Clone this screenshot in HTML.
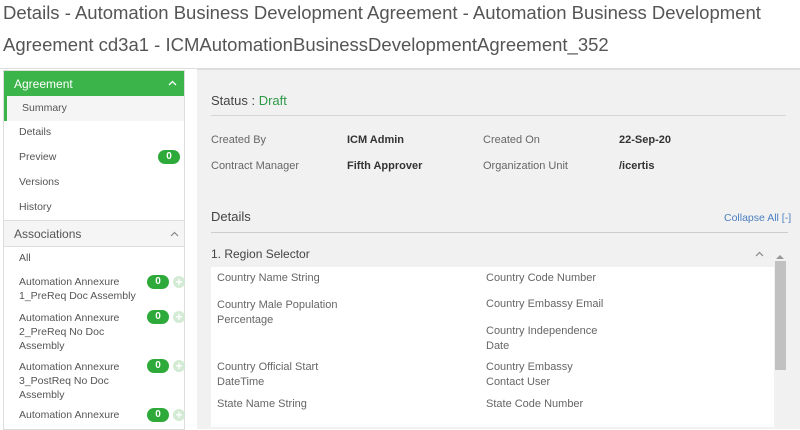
<!DOCTYPE html>
<html><head><style>
*{margin:0;padding:0;box-sizing:border-box}
body{width:800px;height:423px;overflow:hidden;background:#fff;font-family:"Liberation Sans",sans-serif;color:#555;position:relative}
.a{position:absolute;white-space:nowrap}
.t{font-size:18.5px;color:#555;left:3px}
.sb{left:3px;top:70px;width:182px;height:360px;border:1px solid #ddd;background:#fff}
.s{font-size:10.5px;color:#555}
.badge{position:absolute;background:#2eaa3a;color:#fff;font-size:10px;border-radius:8px;width:22px;height:14px;text-align:center;line-height:14px;font-weight:bold}
.plus{position:absolute;width:12px;height:12px;border-radius:50%;background:#d3ebd5;color:#fff;font-size:12px;line-height:12px;text-align:center;font-weight:bold}
.main{left:197px;top:69px;width:603px;height:360px;background:#f2f1f1;border-top:1px solid #ddd}
.l{font-size:11px;color:#666}
.v{font-size:11px;color:#333;font-weight:bold}
.chev{position:absolute}
</style></head><body>
<div class="a t" style="top:2px">Details - Automation Business Development Agreement - Automation Business Development</div>
<div class="a t" style="top:34px">Agreement cd3a1 - ICMAutomationBusinessDevelopmentAgreement_352</div>
<div class="a" style="left:0;top:68px;width:800px;height:1px;background:#ddd"></div>

<div class="a sb">
 <div class="a" style="left:0;top:0;width:180px;height:25px;background:#3bb54a"></div>
 <div class="a" style="left:10px;top:6px;color:#fff;font-size:12px">Agreement</div>
 <svg class="chev" style="left:164px;top:9px" width="9" height="6"><path d="M1 5 L4.5 1.5 L8 5" stroke="#fff" stroke-width="1.3" fill="none"/></svg>
 <div class="a" style="left:0;top:25px;width:180px;height:25px;background:#f5f5f5;border-left:3px solid #3bb54a"></div>
 <div class="a s" style="left:18px;top:31px">Summary</div>
 <div class="a s" style="left:15px;top:55px">Details</div>
 <div class="a s" style="left:15px;top:80px">Preview</div>
 <div class="badge" style="left:154px;top:79px">0</div>
 <div class="a s" style="left:15px;top:105px">Versions</div>
 <div class="a s" style="left:15px;top:130px">History</div>
 <div class="a" style="left:0;top:149px;width:180px;height:27px;background:#f5f5f5;border-top:1px solid #ddd;border-bottom:1px solid #ddd"></div>
 <div class="a" style="left:10px;top:156px;font-size:12px;color:#555">Associations</div>
 <svg class="chev" style="left:166px;top:160px" width="9" height="6"><path d="M1 5 L4.5 1.5 L8 5" stroke="#888" stroke-width="1.2" fill="none"/></svg>
 <div class="a s" style="left:15px;top:181px">All</div>
 <div class="a s" style="left:15px;top:204px;line-height:14px">Automation Annexure<br>1_PreReq Doc Assembly</div>
 <div class="badge" style="left:143px;top:204px">0</div><div class="plus" style="left:169px;top:205px">+</div>
 <div class="a s" style="left:15px;top:240px;line-height:14px">Automation Annexure<br>2_PreReq No Doc<br>Assembly</div>
 <div class="badge" style="left:143px;top:239px">0</div><div class="plus" style="left:169px;top:240px">+</div>
 <div class="a s" style="left:15px;top:289px;line-height:14px">Automation Annexure<br>3_PostReq No Doc<br>Assembly</div>
 <div class="badge" style="left:143px;top:288px">0</div><div class="plus" style="left:169px;top:289px">+</div>
 <div class="a s" style="left:15px;top:337px;line-height:14px">Automation Annexure</div>
 <div class="badge" style="left:143px;top:337px">0</div><div class="plus" style="left:169px;top:338px">+</div>
</div>

<div class="a main"></div>
<div class="a" style="left:211px;top:93px;font-size:13px;color:#444">Status : <span style="color:#2e9a48">Draft</span></div>
<div class="a" style="left:211px;top:115px;width:575px;height:1px;background:#d5d5d5"></div>
<div class="a l" style="left:211px;top:134px">Created By</div>
<div class="a v" style="left:347px;top:134px">ICM Admin</div>
<div class="a l" style="left:483px;top:134px">Created On</div>
<div class="a v" style="left:619px;top:134px">22-Sep-20</div>
<div class="a l" style="left:211px;top:160px">Contract Manager</div>
<div class="a v" style="left:347px;top:160px">Fifth Approver</div>
<div class="a l" style="left:483px;top:160px">Organization Unit</div>
<div class="a v" style="left:619px;top:160px">/icertis</div>
<div class="a" style="left:211px;top:209px;font-size:13px;color:#444">Details</div>
<div class="a" style="left:724px;top:212px;font-size:10.5px;color:#4a7fc0">Collapse All [-]</div>
<div class="a" style="left:211px;top:232px;width:577px;height:1px;background:#ccc"></div>
<div class="a" style="left:211px;top:247px;font-size:12px;color:#444">1. Region Selector</div>
<svg class="chev" style="left:755px;top:251px" width="9" height="6"><path d="M1 5 L4.5 1.5 L8 5" stroke="#888" stroke-width="1.2" fill="none"/></svg>
<div class="a" style="left:211px;top:267px;width:563px;height:160px;background:#fff"></div>
<div class="a" style="left:776px;top:255px;width:0;height:0;border-left:4px solid transparent;border-right:4px solid transparent;border-bottom:4px solid #999"></div>
<div class="a" style="left:775px;top:261px;width:11px;height:109px;background:#c1c1c1"></div>
<div class="a l" style="left:217px;top:272px">Country Name String</div>
<div class="a l" style="left:217px;top:298px;line-height:15px">Country Male Population<br>Percentage</div>
<div class="a l" style="left:217px;top:360px;line-height:15px">Country Official Start<br>DateTime</div>
<div class="a l" style="left:217px;top:398px">State Name String</div>
<div class="a l" style="left:486px;top:272px">Country Code Number</div>
<div class="a l" style="left:486px;top:298px">Country Embassy Email</div>
<div class="a l" style="left:486px;top:324px;line-height:15px">Country Independence<br>Date</div>
<div class="a l" style="left:486px;top:360px;line-height:15px">Country Embassy<br>Contact User</div>
<div class="a l" style="left:486px;top:398px">State Code Number</div>
</body></html>
